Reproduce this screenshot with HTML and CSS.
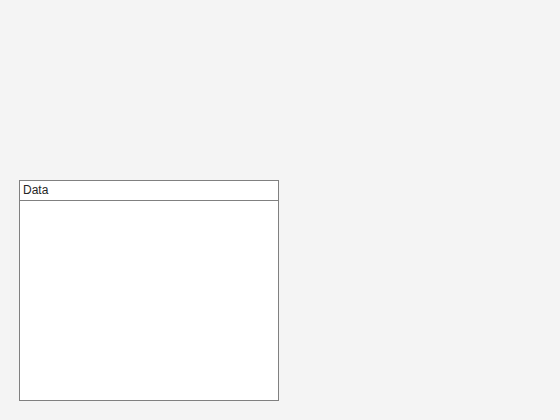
FILE: index.html
```html
<!DOCTYPE html>
<html>
<head>
<meta charset="utf-8">
<link rel="stylesheet" href="styles.css">
</head>
<body>
<div class="page">
  <div class="panel">
    <div class="panel-header">Data</div>
    <div class="panel-body"></div>
  </div>
</div>
</body>
</html>
```
FILE: styles.css
```css
html, body {
  margin: 0;
  padding: 0;
  background: #f4f4f4;
  font-family: "Liberation Sans", Arial, sans-serif;
}
.page {
  padding: 180px 0 0 19px;
}
.panel {
  box-sizing: border-box;
  width: 260px;
  height: 221px;
  border: 1px solid #808080;
  background: #ffffff;
  display: flex;
  flex-direction: column;
}
.panel-header {
  height: 19px;
  border-bottom: 1px solid #808080;
  font-size: 12px;
  line-height: 19px;
  padding-left: 3px;
  color: #262626;
}
.panel-body {
  flex: 1;
}
```
